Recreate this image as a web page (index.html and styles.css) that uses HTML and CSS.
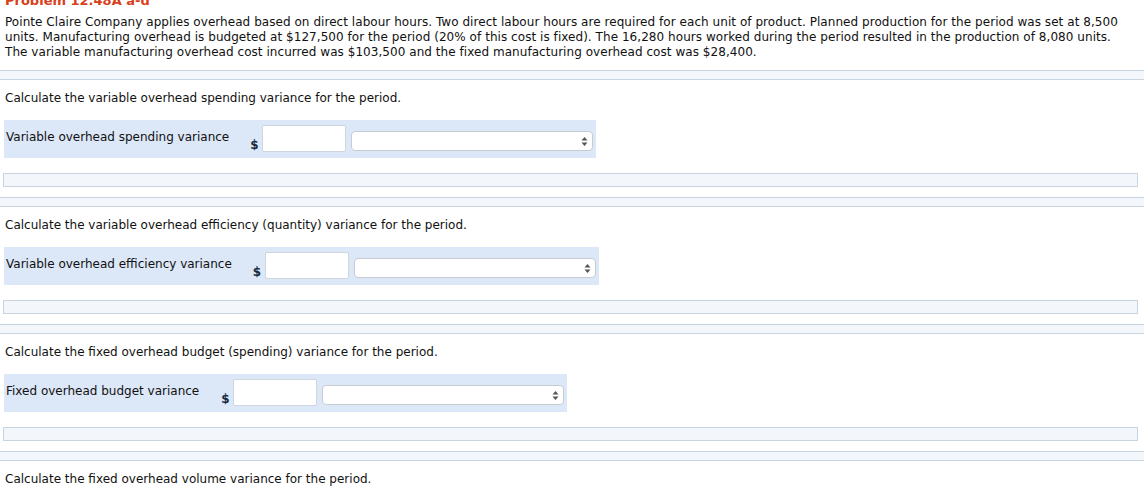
FILE: index.html
```html
<!DOCTYPE html>
<html>
<head>
<meta charset="utf-8">
<link rel="stylesheet" href="styles.css">
</head>
<body>
<div class="title">Problem 12.48A a-d</div>
<p class="intro">Pointe Claire Company applies overhead based on direct labour hours. Two direct labour hours are required for each unit of product. Planned production for the period was set at 8,500 units. Manufacturing overhead is budgeted at $127,500 for the period (20% of this cost is fixed). The 16,280 hours worked during the period resulted in the production of 8,080 units. The variable manufacturing overhead cost incurred was $103,500 and the fixed manufacturing overhead cost was $28,400.</p>

<div class="sep"></div>

<section class="part">
  <p class="question">Calculate the variable overhead spending variance for the period.</p>
  <div class="answer-row">
    <span class="label l1">Variable overhead spending variance</span>
    <span class="dollar">$</span>
    <input class="amount" type="text">
    <div class="select"><svg width="7" height="11" viewBox="0 0 7 11"><path d="M3.5 1 L6.5 4.5 H0.5 Z M3.5 10 L6.5 6.5 H0.5 Z" fill="#555"/></svg></div>
  </div>
  <div class="feedback"></div>
</section>
<div class="sep"></div>

<section class="part">
  <p class="question">Calculate the variable overhead efficiency (quantity) variance for the period.</p>
  <div class="answer-row">
    <span class="label l2">Variable overhead efficiency variance</span>
    <span class="dollar">$</span>
    <input class="amount" type="text">
    <div class="select"><svg width="7" height="11" viewBox="0 0 7 11"><path d="M3.5 1 L6.5 4.5 H0.5 Z M3.5 10 L6.5 6.5 H0.5 Z" fill="#555"/></svg></div>
  </div>
  <div class="feedback"></div>
</section>
<div class="sep"></div>

<section class="part">
  <p class="question">Calculate the fixed overhead budget (spending) variance for the period.</p>
  <div class="answer-row">
    <span class="label l3">Fixed overhead budget variance</span>
    <span class="dollar">$</span>
    <input class="amount" type="text">
    <div class="select"><svg width="7" height="11" viewBox="0 0 7 11"><path d="M3.5 1 L6.5 4.5 H0.5 Z M3.5 10 L6.5 6.5 H0.5 Z" fill="#555"/></svg></div>
  </div>
  <div class="feedback"></div>
</section>
<div class="sep"></div>

<section class="part">
  <p class="question">Calculate the fixed overhead volume variance for the period.</p>
</section>
</body>
</html>
```

FILE: styles.css
```css
html, body {
  margin: 0;
  padding: 0;
  background: #fff;
}
body {
  font-family: "DejaVu Sans", Verdana, sans-serif;
  font-size: 12px;
  line-height: 15px;
  color: #111;
  overflow: hidden;
}
.title {
  margin: -7px 0 7px 0;
  padding-left: 5px;
  height: 15px;
  color: #d8401c;
  font-weight: bold;
  font-size: 13px;
}
.intro {
  margin: 0 0 10px 0;
  padding: 0 20px 0 5px;
  letter-spacing: 0.05px;
}
.sep {
  height: 8px;
  background: #f3f7fb;
  border-top: 1px solid #c9d4e1;
  border-bottom: 1px solid #c9d4e1;
}
.part {
  padding-top: 11px;
}
.question {
  margin: 0 0 14px 0;
  padding-left: 5px;
}
.answer-row {
  display: inline-flex;
  align-items: flex-start;
  margin-left: 4px;
  height: 38px;
  padding: 5px 3px 0 2px;
  box-sizing: border-box;
  background: #dce7f8;
}
.label {
  padding-top: 5px;
  margin-right: 21px;
}
.l2 {
  margin-right: 21px;
}
.l3 {
  margin-right: 22px;
}
.dollar {
  align-self: flex-end;
  padding-bottom: 5px;
  font-size: 12px;
  font-weight: bold;
  color: #1a2a40;
  width: 12px;
}
.amount {
  width: 84px;
  height: 27px;
  box-sizing: border-box;
  margin: 0;
  border: 1px solid #cfd6de;
  border-radius: 2px;
  background: #fff;
  padding: 0;
}
.select {
  margin: 6px 0 0 5px;
  width: 242px;
  height: 20px;
  box-sizing: border-box;
  border: 1px solid #c6ccd3;
  border-radius: 4px;
  background: #fff;
  display: flex;
  align-items: center;
  justify-content: flex-end;
  padding-right: 4px;
}
.feedback {
  margin: 15px 6px 10px 3px;
  height: 14px;
  box-sizing: border-box;
  background: #f3f7fb;
  border: 1px solid #c9d4e1;
}
```
